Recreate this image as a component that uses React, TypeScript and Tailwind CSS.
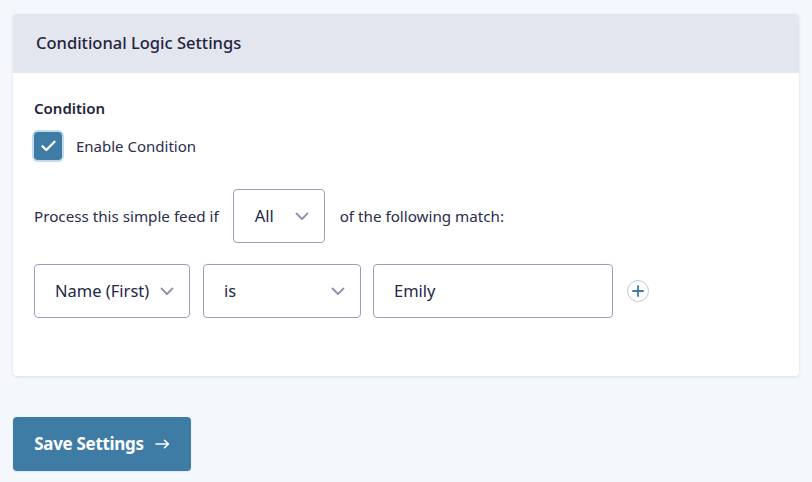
import { useState } from 'react';

function Chevron() {
  return (
    <svg width="14" height="9" viewBox="0 0 14 9" fill="none" className="shrink-0">
      <path d="M1.5 1.5 7 7l5.5-5.5" stroke="#8e90ae" strokeWidth="1.8" strokeLinecap="round" strokeLinejoin="round" />
    </svg>
  );
}

function SelectBox({ value, width, textPad }: { value: string; width: string; textPad: string }) {
  return (
    <div
      className={`${width} h-[54px] flex items-center justify-between ${textPad} pr-[15px] border border-[#9c9ec0] rounded-[4px] bg-white text-[16.5px] text-[#242748]`}
    >
      <span>{value}</span>
      <Chevron />
    </div>
  );
}

export default function App() {
  const [enabled, setEnabled] = useState(true);

  return (
    <div
      className="w-[812px] h-[482px] bg-[#f4f7fb] pt-[14px] px-[13px] overflow-hidden"
      style={{ fontFamily: '"Noto Sans", "Open Sans", sans-serif' }}
    >
      {/* Card */}
      <div className="w-[786px] bg-white rounded-[4px] shadow-[0_1px_3px_rgba(30,40,80,0.12)] overflow-hidden">
        <div className="h-[59px] bg-[#e3e5ef] flex items-center px-[23px]">
          <h2 className="text-[16.5px] font-medium text-[#1f2440]">Conditional Logic Settings</h2>
        </div>

        <div className="px-[21px] pt-[25px] pb-[58px]">
          <div className="text-[15px] font-semibold text-[#1f2440] leading-5">Condition</div>

          <label className="mt-[14px] flex items-center gap-[14px] cursor-pointer">
            <button
              onClick={() => setEnabled(!enabled)}
              className="w-[28px] h-[28px] rounded-[4px] bg-[#3e7ca6] ring-2 ring-[#c3daec] flex items-center justify-center"
            >
              {enabled && (
                <svg width="15" height="12" viewBox="0 0 15 12" fill="none">
                  <path d="M1.5 6.2 5.3 10 13.5 1.8" stroke="white" strokeWidth="2.3" strokeLinecap="round" strokeLinejoin="round" />
                </svg>
              )}
            </button>
            <span className="text-[15px] text-[#2a2d4d]">Enable Condition</span>
          </label>

          <div className="mt-[29px] flex items-center text-[15.2px] text-[#2a2d4d]">
            <span>Process this simple feed if</span>
            <div className="ml-[14px] mr-[15px]">
              <SelectBox value="All" width="w-[92px]" textPad="pl-[21px]" />
            </div>
            <span>of the following match:</span>
          </div>

          <div className="mt-[21px] flex items-center">
            <SelectBox value="Name (First)" width="w-[156px]" textPad="pl-[20px]" />
            <div className="ml-[13px]">
              <SelectBox value="is" width="w-[158px]" textPad="pl-[20px]" />
            </div>
            <div className="ml-[12px] w-[240px] h-[54px] flex items-center px-[20px] border border-[#9c9ec0] rounded-[4px] text-[16.5px] text-[#242748]">
              Emily
            </div>
            <button className="ml-[14px] w-[22px] h-[22px] rounded-full border border-[#c4c6dc] flex items-center justify-center">
              <svg width="12" height="12" viewBox="0 0 12 12" fill="none">
                <path d="M6 1v10M1 6h10" stroke="#3e7ca6" strokeWidth="1.8" strokeLinecap="round" />
              </svg>
            </button>
          </div>
        </div>
      </div>

      <button className="mt-[41px] w-[178px] h-[54px] rounded-[4px] bg-[#3e7ca6] text-white text-[17px] font-bold flex items-center justify-center gap-[11px] shadow-[0_1px_2px_rgba(0,0,0,0.08)]">
        <span className="tracking-[-0.3px]">Save Settings</span>
        <svg width="15" height="10" viewBox="0 0 15 10" fill="none">
          <path d="M1 5h12.5M9.5 1.2 13.5 5l-4 3.8" stroke="white" strokeWidth="1.5" strokeLinecap="round" strokeLinejoin="round" />
        </svg>
      </button>
    </div>
  );
}
